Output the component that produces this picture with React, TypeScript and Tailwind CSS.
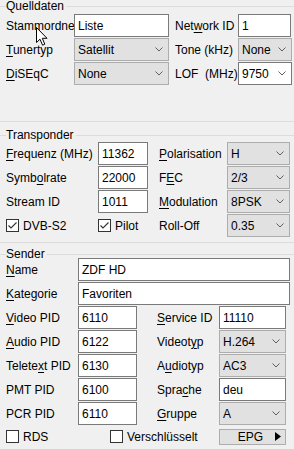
import React from "react";

const Chevron = () => (
  <svg width="8" height="5" viewBox="0 0 8 5" className="shrink-0">
    <polyline points="0.5,0.5 4,4 7.5,0.5" fill="none" stroke="#606060" strokeWidth="1" />
  </svg>
);

const Combo = ({ w, value, white = false }: { w: string; value: string; white?: boolean }) => (
  <div
    className={`${w} h-full flex items-center justify-between pl-[3px] pr-[5px] border ${
      white ? "bg-white border-[#7a7a7a]" : "bg-[#e1e1e1] border-[#adadad]"
    }`}
  >
    <span>{value}</span>
    <Chevron />
  </div>
);

const Input = ({ w, value }: { w: string; value: string }) => (
  <div className={`${w} h-full flex items-center pl-[3px] bg-white border border-[#7a7a7a] overflow-hidden whitespace-nowrap`}>
    {value}
  </div>
);

const Check = ({ checked }: { checked: boolean }) => (
  <div className="w-[13px] h-[13px] bg-white border border-[#333333] flex items-center justify-center shrink-0">
    {checked && (
      <svg width="11" height="11" viewBox="0 0 11 11">
        <polyline points="1.5,5.5 4,8 9.5,2.5" fill="none" stroke="#333333" strokeWidth="1.1" />
      </svg>
    )}
  </div>
);

const U = ({ children }: { children: React.ReactNode }) => (
  <span className="underline underline-offset-[2px] decoration-[1px]">{children}</span>
);

export default function App() {
  return (
    <div
      className="relative w-[294px] h-[449px] bg-[#f0f0f0] text-black text-[12px] leading-[14px] overflow-hidden"
      style={{ fontFamily: '"Liberation Sans", Arial, sans-serif' }}
    >
      {/* Quelldaten */}
      <fieldset className="border-t border-b border-[#dcdcdc] h-[122px]">
        <legend className="ml-[6px] pr-[2px] leading-[12px]">Quelldaten</legend>
        <div className="mt-[2px] flex flex-col gap-[1px]">
          <div className="flex h-[23px] items-center pl-[6px]">
            <div className="w-[68px] whitespace-nowrap">Stammordne</div>
            <Input w="w-[95px]" value="Liste" />
            <div className="w-[63px] ml-[6px]">
              Net<U>w</U>ork ID
            </div>
            <Input w="w-[53px]" value="1" />
          </div>
          <div className="flex h-[23px] items-center pl-[6px]">
            <div className="w-[68px]">
              <U>T</U>unertyp
            </div>
            <Combo w="w-[95px]" value="Satellit" />
            <div className="w-[63px] ml-[6px]">Tone (kHz)</div>
            <Combo w="w-[54px]" value="None" />
          </div>
          <div className="flex h-[23px] items-center pl-[6px]">
            <div className="w-[68px]">
              <U>D</U>iSEqC
            </div>
            <Combo w="w-[95px]" value="None" />
            <div className="w-[63px] ml-[6px] whitespace-pre">LOF  (MHz)</div>
            <Combo w="w-[54px]" value="9750" white />
          </div>
        </div>
      </fieldset>

      {/* Transponder */}
      <fieldset className="mt-[7px] border-t border-b border-[#dcdcdc] h-[114px]">
        <legend className="ml-[6px] pr-[2px] leading-[12px]">Transponder</legend>
        <div className="mt-[1px] flex flex-col gap-[1px]">
          <div className="flex h-[23px] items-center pl-[6px]">
            <div className="w-[92px]">
              <U>F</U>requenz (MHz)
            </div>
            <Input w="w-[50px]" value="11362" />
            <div className="w-[68px] ml-[11px]">
              <U>P</U>olarisation
            </div>
            <Combo w="w-[63px]" value="H" />
          </div>
          <div className="flex h-[23px] items-center pl-[6px]">
            <div className="w-[92px]">
              Symb<U>o</U>lrate
            </div>
            <Input w="w-[50px]" value="22000" />
            <div className="w-[68px] ml-[11px]">
              F<U>E</U>C
            </div>
            <Combo w="w-[63px]" value="2/3" />
          </div>
          <div className="flex h-[23px] items-center pl-[6px]">
            <div className="w-[92px]">Stream ID</div>
            <Input w="w-[50px]" value="1011" />
            <div className="w-[68px] ml-[11px]">
              <U>M</U>odulation
            </div>
            <Combo w="w-[63px]" value="8PSK" />
          </div>
          <div className="flex h-[23px] items-center pl-[6px]">
            <div className="w-[92px] flex items-center gap-[4px]">
              <Check checked />
              <span>DVB-S2</span>
            </div>
            <div className="w-[50px] flex items-center gap-[4px]">
              <Check checked />
              <span>Pilot</span>
            </div>
            <div className="w-[68px] ml-[11px]">Roll-Off</div>
            <Combo w="w-[63px]" value="0.35" />
          </div>
        </div>
      </fieldset>

      {/* Sender */}
      <fieldset className="mt-[5px] border-t border-[#dcdcdc]">
        <legend className="ml-[6px] pr-[2px] leading-[12px]">Sender</legend>
        <div className="-mt-[2px] flex flex-col gap-[1px]">
          <div className="flex h-[23px] items-center pl-[6px]">
            <div className="w-[72px]">
              <U>N</U>ame
            </div>
            <Input w="w-[212px]" value="ZDF HD" />
          </div>
          <div className="flex h-[23px] items-center pl-[6px]">
            <div className="w-[72px]">
              <U>K</U>ategorie
            </div>
            <Input w="w-[212px]" value="Favoriten" />
          </div>
          <div className="flex h-[23px] items-center pl-[6px]">
            <div className="w-[72px]">
              <U>V</U>ideo PID
            </div>
            <Input w="w-[59px]" value="6110" />
            <div className="w-[62px] ml-[20px]">
              <U>S</U>ervice ID
            </div>
            <Input w="w-[67px]" value="11110" />
          </div>
          <div className="flex h-[23px] items-center pl-[6px]">
            <div className="w-[72px]">
              <U>A</U>udio PID
            </div>
            <Input w="w-[59px]" value="6122" />
            <div className="w-[62px] ml-[20px]">
              Videot<U>y</U>p
            </div>
            <Combo w="w-[67px]" value="H.264" />
          </div>
          <div className="flex h-[23px] items-center pl-[6px]">
            <div className="w-[72px]">
              Telete<U>x</U>t PID
            </div>
            <Input w="w-[59px]" value="6130" />
            <div className="w-[62px] ml-[20px]">
              A<U>u</U>diotyp
            </div>
            <Combo w="w-[67px]" value="AC3" />
          </div>
          <div className="flex h-[23px] items-center pl-[6px]">
            <div className="w-[72px]">PMT PID</div>
            <Input w="w-[59px]" value="6100" />
            <div className="w-[62px] ml-[20px]">
              Spra<U>c</U>he
            </div>
            <Input w="w-[67px]" value="deu" />
          </div>
          <div className="flex h-[23px] items-center pl-[6px]">
            <div className="w-[72px]">PCR PID</div>
            <Input w="w-[59px]" value="6110" />
            <div className="w-[62px] ml-[20px]">
              <U>G</U>ruppe
            </div>
            <Combo w="w-[67px]" value="A" />
          </div>
          <div className="flex h-[19px] items-center pl-[6px] mt-[1px]">
            <div className="w-[104px] flex items-center gap-[4px]">
              <Check checked={false} />
              <span>RDS</span>
            </div>
            <div className="w-[109px] flex items-center gap-[4px]">
              <Check checked={false} />
              <span>Verschlüsselt</span>
            </div>
            <div className="w-[67px] h-[16px] bg-[#e1e1e1] border border-[#adadad] flex items-center relative">
              <span className="flex-1 text-center pl-[6px]">EPG</span>
              <svg width="6" height="9" viewBox="0 0 6 9" className="mr-[4px]">
                <polygon points="0,0 6,4.5 0,9" fill="#000" />
              </svg>
            </div>
          </div>
        </div>
      </fieldset>

      {/* mouse cursor */}
      <svg
        width="13"
        height="20"
        viewBox="0 0 13 20"
        className="absolute left-[36px] top-[27px]"
      >
        <path
          d="M0.5 0.5 L0.5 15.5 L4 12.2 L6.6 18.2 L8.8 17.2 L6.3 11.3 L11 11.3 Z"
          fill="#fff"
          stroke="#000"
          strokeWidth="1"
          strokeLinejoin="miter"
        />
      </svg>
    </div>
  );
}
